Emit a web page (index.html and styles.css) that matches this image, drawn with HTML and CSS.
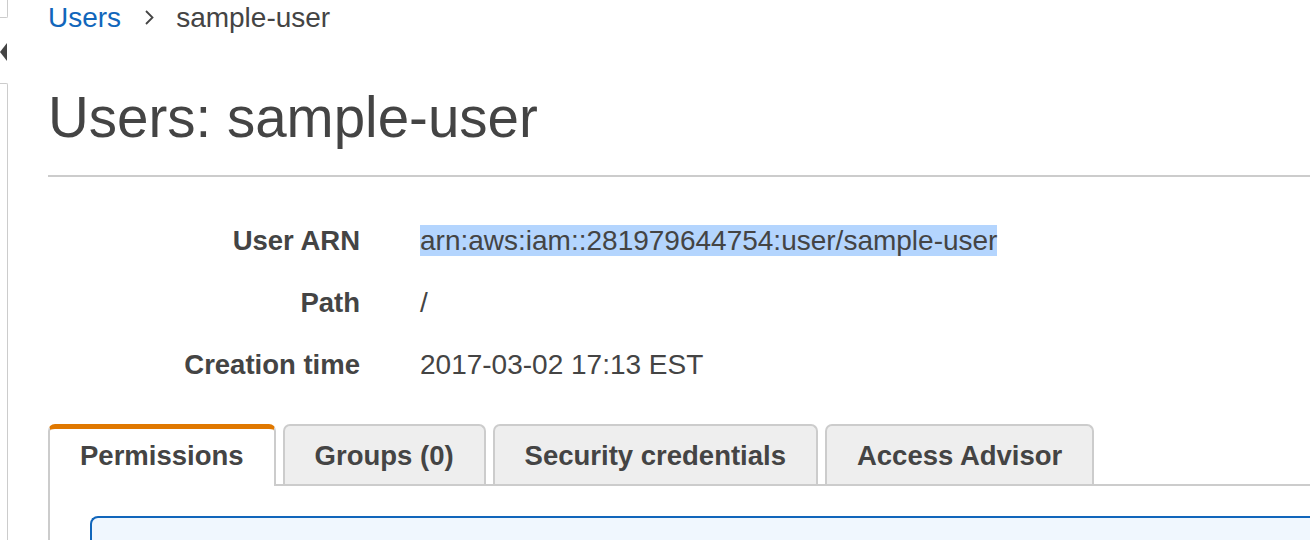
FILE: index.html
```html
<!DOCTYPE html>
<html>
<head>
<meta charset="utf-8">
<link rel="stylesheet" href="styles.css">
</head>
<body>
<div class="layout">
  <div class="rail">
    <div class="rail-top"></div>
    <div class="rail-toggle"><span class="tri"></span></div>
    <div class="rail-bottom"></div>
  </div>
  <main class="main">
    <nav class="crumbs">
      <a class="crumb-link" href="#">Users</a>
      <svg class="chev" width="12" height="16" viewBox="0 0 12 16"><polyline points="3,2 9.5,8.5 3,15" fill="none" stroke="#444" stroke-width="1.8"/></svg>
      <span class="crumb-current">sample-user</span>
    </nav>
    <h1 class="title">Users: sample-user</h1>
    <div class="rule"></div>
    <dl class="details">
      <dt>User ARN</dt>
      <dd><span class="sel">arn:aws:iam::281979644754:user/sample-user</span></dd>
      <dt>Path</dt>
      <dd>/</dd>
      <dt>Creation time</dt>
      <dd>2017-03-02 17:13 EST</dd>
    </dl>
    <div class="tabs">
      <div class="tab active">Permissions</div>
      <div class="tab">Groups (0)</div>
      <div class="tab">Security credentials</div>
      <div class="tab">Access Advisor</div>
    </div>
    <div class="panel">
      <div class="info"></div>
    </div>
  </main>
</div>
</body>
</html>
```

FILE: styles.css
```css
html, body {
  margin: 0;
  padding: 0;
  overflow: hidden;
  background: #fff;
}
body {
  font-family: "Liberation Sans", Arial, Helvetica, sans-serif;
  color: #444;
  width: 1310px;
  height: 540px;
}
.layout {
  display: flex;
  height: 540px;
  width: 1310px;
}
.rail {
  width: 8px;
  flex: none;
  display: flex;
  flex-direction: column;
}
.rail-top {
  height: 17px;
  border-right: 1px solid #ccc;
  border-bottom: 1px solid #ccc;
  border-bottom-right-radius: 2px;
}
.rail-toggle {
  height: 65px;
  display: flex;
  align-items: flex-start;
  padding-top: 25px;
  box-sizing: border-box;
}
.tri {
  width: 0;
  height: 0;
  border-right: 7px solid #444;
  border-top: 9px solid transparent;
  border-bottom: 9px solid transparent;
}
.rail-bottom {
  flex: 1;
  border-top: 1px solid #ccc;
  border-right: 1px solid #ccc;
  border-top-right-radius: 2px;
}
.main {
  flex: 1;
  min-width: 0;
  padding-left: 40px;
  display: flex;
  flex-direction: column;
  height: 540px;
}
.crumbs {
  display: flex;
  align-items: center;
  height: 36px;
  font-size: 28px;
  line-height: 36px;
  flex: none;
}
.crumb-link {
  color: #1166bb;
  text-decoration: none;
}
.chev {
  margin: 0 21px 0 22px;
  position: relative;
  top: -1px;
}
.title {
  margin: 48px 0 0;
  font-size: 56.5px;
  font-weight: normal;
  line-height: 67px;
  height: 67px;
  color: #444;
  flex: none;
}
.rule {
  margin-top: 24px;
  height: 2px;
  background: #ccc;
  flex: none;
}
.details {
  margin: 46px 0 0;
  display: grid;
  grid-template-columns: 312px 1fr;
  column-gap: 60px;
  row-gap: 26px;
  font-size: 28px;
  line-height: 36px;
  flex: none;
}
.details dt {
  font-weight: bold;
  text-align: right;
  font-size: 27.5px;
}
.details dd {
  margin: 0;
}
.sel {
  background: #b4d5fe;
}
.tabs {
  margin-top: 41px;
  display: flex;
  align-items: flex-end;
  gap: 7px;
  border-bottom: 2px solid #ccc;
  height: 60px;
  flex: none;
}
.tab {
  box-sizing: border-box;
  height: 60px;
  padding: 12px 30px 10px;
  border: 2px solid #ccc;
  border-bottom: 0;
  border-radius: 7px 7px 0 0;
  background: #eee;
  font-size: 27.5px;
  line-height: 36px;
  font-weight: bold;
  color: #444;
  white-space: nowrap;
}
.tab.active {
  height: 62px;
  margin-bottom: -2px;
  padding-top: 9px;
  padding-bottom: 12px;
  background: #fff;
  border-top: 5px solid #e07800;
}
.panel {
  flex: 1;
  min-height: 0;
  border-left: 2px solid #ccc;
  padding: 30px 0 0 40px;
  display: flex;
}
.info {
  flex: 1;
  border: 2px solid #1166bb;
  border-right: 0;
  border-bottom: 0;
  border-radius: 8px 0 0 0;
  background: #f0f7fe;
}
```
